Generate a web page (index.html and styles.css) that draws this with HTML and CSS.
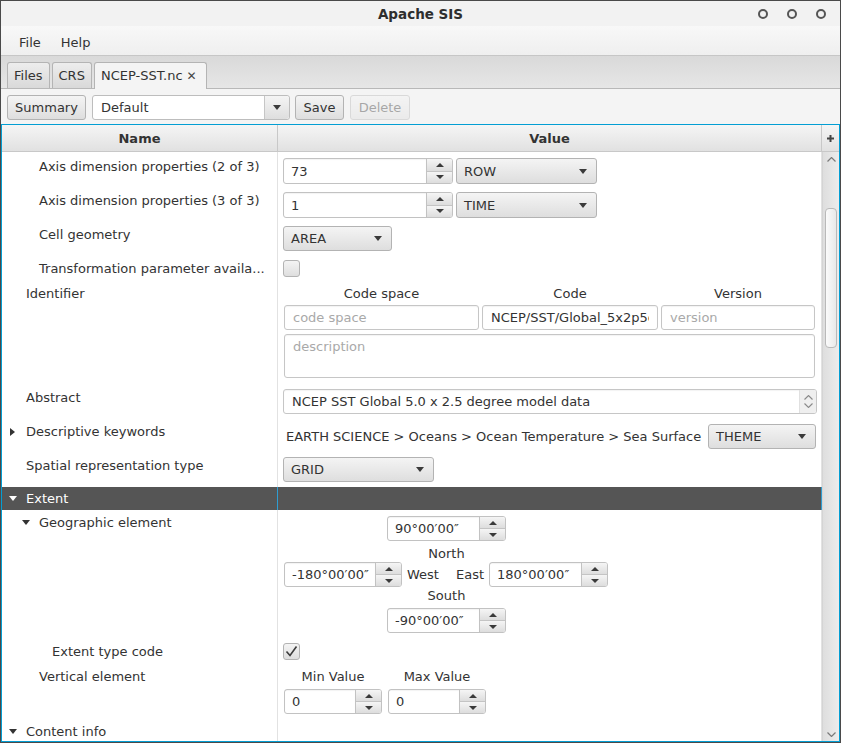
FILE: index.html
```html
<!DOCTYPE html>
<html>
<head>
<meta charset="utf-8">
<title>Apache SIS</title>
<link rel="stylesheet" href="styles.css">
</head>
<body>
<div class="window">
  <div class="titlebar">
    <span class="title">Apache SIS</span>
    <div class="wctl"><span class="dot"></span><span class="dot"></span><span class="dot"></span></div>
  </div>
  <div class="menubar"><span class="menu">File</span><span class="menu">Help</span></div>
  <div class="tabbar">
    <div class="tab">Files</div>
    <div class="tab">CRS</div>
    <div class="tab sel">NCEP-SST.nc<span class="close">✕</span></div>
  </div>
  <div class="toolbar">
    <div class="btn summary">Summary</div>
    <div class="ecombo"><div class="etxt">Default</div><div class="earr"><i class="carr"></i></div></div>
    <div class="btn save">Save</div>
    <div class="btn dis">Delete</div>
  </div>
  <div class="table">
    <div class="thead">
      <div class="th thname">Name</div>
      <div class="th thval">Value</div>
      <div class="th corner"><svg width="7" height="7" viewBox="0 0 7 7"><path d="M3.5 0V7M0 3.5H7" stroke="#444" stroke-width="2"/></svg></div>
    </div>
    <div class="tbody">
      <div class="rows">
        <div class="row h36 first">
          <div class="name l2"><span class="disc"></span><span>Axis dimension properties (2 of 3)</span></div>
          <div class="value">
            <div class="spinner w170"><div class="sp-text">73</div><div class="sp-btns"><div><i class="tup"></i></div><div><i class="tdn"></i></div></div></div>
            <div class="combo w141"><span>ROW</span><i class="carr"></i></div>
          </div>
        </div>
        <div class="row h34">
          <div class="name l2"><span class="disc"></span><span>Axis dimension properties (3 of 3)</span></div>
          <div class="value">
            <div class="spinner w170"><div class="sp-text">1</div><div class="sp-btns"><div><i class="tup"></i></div><div><i class="tdn"></i></div></div></div>
            <div class="combo w141"><span>TIME</span><i class="carr"></i></div>
          </div>
        </div>
        <div class="row h34">
          <div class="name l2"><span class="disc"></span><span>Cell geometry</span></div>
          <div class="value">
            <div class="combo w109 h25"><span>AREA</span><i class="carr"></i></div>
          </div>
        </div>
        <div class="row h25">
          <div class="name l2"><span class="disc"></span><span>Transformation parameter availa...</span></div>
          <div class="value"><div class="cb"></div></div>
        </div>
        <div class="row h104">
          <div class="name l1"><span class="disc"></span><span>Identifier</span></div>
          <div class="value ident">
            <div class="idgrid">
              <div class="ih">Code space</div><div class="ih">Code</div><div class="ih">Version</div>
              <div class="tf ph">code space</div><div class="tf"><span class="clip">NCEP/SST/Global_5x2p5deg</span></div><div class="tf ph">version</div>
              <div class="tf ta ph">description</div>
            </div>
          </div>
        </div>
        <div class="row h34">
          <div class="name l1"><span class="disc"></span><span>Abstract</span></div>
          <div class="value">
            <div class="tf abs"><span class="abstext">NCEP SST Global 5.0 x 2.5 degree model data</span>
              <div class="abs-sc">
                <svg width="9" height="5" viewBox="0 0 9 5"><polyline points="0.5,4.5 4.5,0.5 8.5,4.5" fill="none" stroke="#8a8a8a" stroke-width="1.1"/></svg>
                <svg width="9" height="5" viewBox="0 0 9 5"><polyline points="0.5,0.5 4.5,4.5 8.5,0.5" fill="none" stroke="#8a8a8a" stroke-width="1.1"/></svg>
              </div>
            </div>
          </div>
        </div>
        <div class="row h34">
          <div class="name l1"><span class="disc"><svg class="tri-r" width="5" height="8" viewBox="0 0 5 8"><path d="M0 0L5 4L0 8Z"/></svg></span><span>Descriptive keywords</span></div>
          <div class="value kw">
            <span class="kwtext">EARTH SCIENCE &gt; Oceans &gt; Ocean Temperature &gt; Sea Surface</span>
            <div class="combo w108 h25"><span>THEME</span><i class="carr"></i></div>
          </div>
        </div>
        <div class="row h34">
          <div class="name l1"><span class="disc"></span><span>Spatial representation type</span></div>
          <div class="value">
            <div class="combo w151 h25"><span>GRID</span><i class="carr"></i></div>
          </div>
        </div>
        <div class="row h23 sel">
          <div class="name l1"><span class="disc"><svg class="tri-d" width="8" height="5" viewBox="0 0 8 5"><path d="M0 0H8L4 5Z"/></svg></span><span>Extent</span></div>
          <div class="value"></div>
        </div>
        <div class="row h129">
          <div class="name l2"><span class="disc"><svg class="tri-d" width="8" height="5" viewBox="0 0 8 5"><path d="M0 0H8L4 5Z"/></svg></span><span>Geographic element</span></div>
          <div class="value geo">
            <div class="geobox">
              <div class="spinner w119 h25"><div class="sp-text">90°00′00″</div><div class="sp-btns"><div><i class="tup"></i></div><div><i class="tdn"></i></div></div></div>
              <div class="glabel north">North</div>
              <div class="georow">
                <div class="spinner w118 h25"><div class="sp-text">-180°00′00″</div><div class="sp-btns"><div><i class="tup"></i></div><div><i class="tdn"></i></div></div></div>
                <span class="gl west">West</span>
                <span class="gl east">East</span>
                <div class="spinner w119 h25"><div class="sp-text">180°00′00″</div><div class="sp-btns"><div><i class="tup"></i></div><div><i class="tdn"></i></div></div></div>
              </div>
              <div class="glabel">South</div>
              <div class="spinner w119 h25 south"><div class="sp-text">-90°00′00″</div><div class="sp-btns"><div><i class="tup"></i></div><div><i class="tdn"></i></div></div></div>
            </div>
          </div>
        </div>
        <div class="row h25">
          <div class="name l3"><span class="disc"></span><span>Extent type code</span></div>
          <div class="value"><div class="cb"><svg width="15" height="15" viewBox="0 0 15 15"><polyline points="2.5,7.5 6,11.5 12.5,2.5" fill="none" stroke="#3c3c3c" stroke-width="1.6"/></svg></div></div>
        </div>
        <div class="row h54">
          <div class="name l2"><span class="disc"></span><span>Vertical element</span></div>
          <div class="value vert">
            <div class="vcol"><div class="vlab">Min Value</div><div class="spinner w98 h25"><div class="sp-text">0</div><div class="sp-btns"><div><i class="tup"></i></div><div><i class="tdn"></i></div></div></div></div>
            <div class="vcol"><div class="vlab">Max Value</div><div class="spinner w98 h25"><div class="sp-text">0</div><div class="sp-btns"><div><i class="tup"></i></div><div><i class="tdn"></i></div></div></div></div>
          </div>
        </div>
        <div class="row h30 last">
          <div class="name l1"><span class="disc"><svg class="tri-d" width="8" height="5" viewBox="0 0 8 5"><path d="M0 0H8L4 5Z"/></svg></span><span>Content info</span></div>
          <div class="value"></div>
        </div>
      </div>
      <div class="vscroll">
        <div class="sbtn"><svg width="9" height="5" viewBox="0 0 9 5"><polyline points="0.5,4.5 4.5,0.5 8.5,4.5" fill="none" stroke="#7a7a7a" stroke-width="1.2"/></svg></div>
        <div class="thumb"></div>
        <div class="sbtn down"><svg width="9" height="5" viewBox="0 0 9 5"><polyline points="0.5,0.5 4.5,4.5 8.5,0.5" fill="none" stroke="#7a7a7a" stroke-width="1.2"/></svg></div>
      </div>
    </div>
  </div>
</div>
</body>
</html>
```

FILE: styles.css
```css
body {
  margin: 0;
  font-family: "DejaVu Sans", "Noto Sans", sans-serif;
  font-size: 13px;
  color: #333;
}

.window {
  width: 841px;
  height: 743px;
  box-sizing: border-box;
  border: 1px solid #4a4a4a;
  background: #f4f4f4;
  display: flex;
  flex-direction: column;
  overflow: hidden;
}

/* title bar */
.titlebar {
  height: 25px;
  flex: none;
  display: grid;
  grid-template-columns: 1fr auto 1fr;
  align-items: center;
  background: #f2f2f2;
}
.title {
  grid-column: 2;
  font-weight: bold;
  font-size: 13.5px;
  color: #2e2e2e;
  padding-top: 1px;
}
.wctl {
  grid-column: 3;
  justify-self: end;
  display: flex;
  gap: 19px;
  padding-right: 14px;
  padding-top: 1px;
}
.dot {
  width: 10px;
  height: 10px;
  box-sizing: border-box;
  border: 2px solid #555;
  border-radius: 50%;
}

/* menu bar */
.menubar {
  height: 30px;
  flex: none;
  box-sizing: border-box;
  border-bottom: 1px solid #c6c6c6;
  background: linear-gradient(#f8f8f8, #efefef);
  display: flex;
  align-items: center;
  padding: 3px 0 0 8px;
}
.menu {
  padding: 0 10px;
}

/* tabs */
.tabbar {
  height: 33px;
  flex: none;
  box-sizing: border-box;
  padding: 6px 0 0 6px;
  display: flex;
  align-items: flex-end;
  gap: 2px;
  background: linear-gradient(#d9d9d9, #e6e6e6);
  border-bottom: 1px solid #b8b8b8;
}
.tab {
  height: 26px;
  box-sizing: border-box;
  padding: 0 6px;
  border: 1px solid #b4b4b4;
  border-bottom: none;
  border-radius: 3px 3px 0 0;
  background: linear-gradient(#ededed, #d9d9d9);
  display: flex;
  align-items: center;
}
.tab.sel {
  background: #f4f4f4;
  height: 27px;
  margin-bottom: -1px;
  padding: 0 9px 1px 6px;
}
.close {
  margin-left: 4px;
  font-size: 12px;
  color: #444;
}

/* toolbar */
.toolbar {
  height: 35px;
  flex: none;
  box-sizing: border-box;
  padding: 6px 0 0 6px;
  display: flex;
  align-items: flex-start;
  gap: 6px;
}
.btn {
  height: 25px;
  box-sizing: border-box;
  padding: 0 7px;
  border: 1px solid #b3b3b3;
  border-radius: 3px;
  background: linear-gradient(#f4f4f4, #dedede);
  display: flex;
  align-items: center;
  justify-content: center;
}
.btn.summary { width: 79px; }
.btn.save { width: 49px; margin-left: -1px; }
.btn.dis {
  opacity: 0.4;
  width: 60px;
}
.ecombo {
  width: 198px;
  height: 25px;
  box-sizing: border-box;
  border: 1px solid #bdbdbd;
  border-radius: 3px;
  background: #fff;
  display: flex;
}
.etxt {
  flex: 1;
  padding-left: 8px;
  display: flex;
  align-items: center;
}
.earr {
  width: 24px;
  border-left: 1px solid #c6c6c6;
  border-radius: 0 3px 3px 0;
  background: linear-gradient(#f4f4f4, #dedede);
  display: flex;
  align-items: center;
  justify-content: center;
}
.carr {
  width: 0;
  height: 0;
  border-left: 4px solid transparent;
  border-right: 4px solid transparent;
  border-top: 5px solid #3a3a3a;
}

/* table */
.table {
  flex: 1;
  min-height: 0;
  border: 1px solid #039ed3;
  background: #fff;
  display: flex;
  flex-direction: column;
}
.thead {
  height: 27px;
  flex: none;
  box-sizing: border-box;
  display: flex;
  background: linear-gradient(#f5f5f5, #e1e1e1);
  border-bottom: 1px solid #c8c8c8;
  font-weight: bold;
}
.th {
  box-sizing: border-box;
  display: flex;
  align-items: center;
  justify-content: center;
  border-right: 1px solid #c8c8c8;
}
.thname { width: 276px; }
.thval { width: 544px; }
.corner { width: 17px; border-right: none; }

.tbody {
  flex: 1;
  min-height: 0;
  display: flex;
}
.rows {
  width: 820px;
  overflow: hidden;
}
.row {
  display: flex;
  flex: none;
}
.h23 { height: 23px; }
.h25 { height: 25px; }
.h30 { height: 30px; }
.h34 { height: 34px; }
.h36 { height: 36px; }
.h54 { height: 54px; }
.h104 { height: 104px; }
.h129 { height: 129px; }

.name {
  width: 276px;
  flex: none;
  box-sizing: border-box;
  border-right: 1px solid #e2e2e2;
  display: flex;
  align-items: flex-start;
  padding-top: 4px;
  line-height: 17px;
  white-space: nowrap;
  overflow: hidden;
}
.first .name { padding-top: 6px; }
.first .value { padding-top: 6px; }
.last .name { padding-top: 5px; }
.l1 { padding-left: 0; }
.l2 { padding-left: 13px; }
.l3 { padding-left: 26px; }
.disc {
  width: 24px;
  height: 17px;
  flex: none;
  display: flex;
  align-items: center;
}
.tri-r { margin-left: 8px; fill: #333; }
.tri-d { margin-left: 7px; fill: #333; }

.value {
  width: 544px;
  flex: none;
  box-sizing: border-box;
  border-right: 1px solid #e2e2e2;
  padding: 4px 0 0 5px;
  display: flex;
  align-items: flex-start;
  gap: 3px;
}

.row.sel { background: #555; color: #fff; }
.row.sel .name, .row.sel .value { border-right-color: #2f9dd1; }
.row.sel .name { padding-top: 3px; }
.row.sel .tri-d { fill: #fff; }

/* widgets */
.spinner {
  height: 26px;
  box-sizing: border-box;
  border: 1px solid #c2c2c2;
  border-radius: 3px;
  background: #fff;
  display: flex;
  flex: none;
}
.spinner.h25 { height: 25px; }
.sp-text {
  flex: 1;
  padding: 0 7px;
  display: flex;
  align-items: center;
  white-space: nowrap;
  overflow: hidden;
  box-shadow: inset 0 1px 1px rgba(0,0,0,0.05);
}
.sp-btns {
  width: 25px;
  flex: none;
  border-left: 1px solid #c2c2c2;
  display: flex;
  flex-direction: column;
}
.sp-btns > div {
  flex: 1;
  display: flex;
  align-items: center;
  justify-content: center;
  background: linear-gradient(#f5f5f5, #dddddd);
}
.sp-btns > div:first-child { border-radius: 0 2px 0 0; }
.sp-btns > div + div { border-top: 1px solid #c4c4c4; border-radius: 0 0 2px 0; }
.tup {
  width: 0; height: 0;
  border-left: 4px solid transparent;
  border-right: 4px solid transparent;
  border-bottom: 4px solid #3a3a3a;
}
.tdn {
  width: 0; height: 0;
  border-left: 4px solid transparent;
  border-right: 4px solid transparent;
  border-top: 4px solid #3a3a3a;
}
.w98 { width: 98px; }
.w108 { width: 108px; }
.w109 { width: 109px; }
.w118 { width: 118px; }
.w119 { width: 119px; }
.w141 { width: 141px; }
.w151 { width: 151px; }
.w170 { width: 170px; }

.combo {
  height: 26px;
  box-sizing: border-box;
  flex: none;
  border: 1px solid #b3b3b3;
  border-radius: 3px;
  background: linear-gradient(#f4f4f4, #dedede);
  display: flex;
  align-items: center;
  justify-content: space-between;
  padding: 0 9px 0 7px;
}
.combo.h25 { height: 25px; }

.cb {
  width: 17px;
  height: 17px;
  box-sizing: border-box;
  border: 1px solid #b3b3b3;
  border-radius: 3px;
  background: linear-gradient(#f4f4f4, #dedede);
  display: flex;
}

.tf {
  height: 25px;
  box-sizing: border-box;
  border: 1px solid #c6c6c6;
  border-radius: 3px;
  background: #fff;
  padding: 0 8px;
  display: flex;
  align-items: center;
  white-space: nowrap;
  overflow: hidden;
  box-shadow: inset 0 1px 1px rgba(0,0,0,0.05);
}
.ph { color: #a9a9a9; }
.clip {
  display: block;
  overflow: hidden;
  width: 158px;
  white-space: nowrap;
}

/* identifier */
.ident { padding-left: 6px; }
.idgrid {
  display: grid;
  grid-template-columns: 195px 176px 154px;
  column-gap: 3px;
}
.ih {
  text-align: center;
  line-height: 17px;
  margin-bottom: 3px;
}
.ta {
  grid-column: 1 / -1;
  height: 44px;
  margin-top: 4px;
  align-items: flex-start;
  padding-top: 4px;
}

/* abstract */
.abs {
  width: 534px;
  padding-right: 0;
}
.abstext { flex: 1; }
.abs-sc {
  width: 16px;
  align-self: stretch;
  background: #efefef;
  border-left: 1px solid #e0e0e0;
  display: flex;
  flex-direction: column;
  align-items: center;
  justify-content: center;
  gap: 3px;
}

/* keywords */
.kw {
  align-items: center;
  justify-content: space-between;
  padding: 0 5px 0 5px;
}
.kwtext { margin-left: 3px; white-space: nowrap; }

/* geographic */
.geo { padding: 6px 0 0 6px; }
.geobox {
  width: 325px;
  display: flex;
  flex-direction: column;
  align-items: center;
}
.glabel {
  line-height: 17px;
}
.glabel.north {
  margin-top: 4px;
}
.georow {
  display: flex;
  align-items: center;
  width: 100%;
}
.gl.west { margin-left: 5px; }
.gl.east { margin-left: 17px; margin-right: 5px; }
.south { margin-top: 4px; }

/* vertical */
.vert { padding-left: 6px; gap: 6px; }
.vcol {
  display: flex;
  flex-direction: column;
  align-items: center;
}
.vlab {
  line-height: 17px;
  margin-bottom: 4px;
}

/* scrollbar */
.vscroll {
  width: 17px;
  flex: none;
  box-sizing: border-box;
  border-left: 1px solid #d4d4d4;
  background: linear-gradient(to right, #dedede, #ececec);
  display: flex;
  flex-direction: column;
}
.sbtn {
  height: 12px;
  flex: none;
  display: flex;
  align-items: center;
  justify-content: center;
  padding-top: 1px;
}
.sbtn.down {
  margin-top: auto;
  padding-top: 0;
  margin-bottom: 1px;
}
.thumb {
  margin: 43px 0 0 2px;
  width: 12px;
  height: 140px;
  box-sizing: border-box;
  border: 1px solid #b9b9b9;
  border-radius: 4px;
  background: linear-gradient(to right, #fbfbfb, #e9e9e9);
}
```
